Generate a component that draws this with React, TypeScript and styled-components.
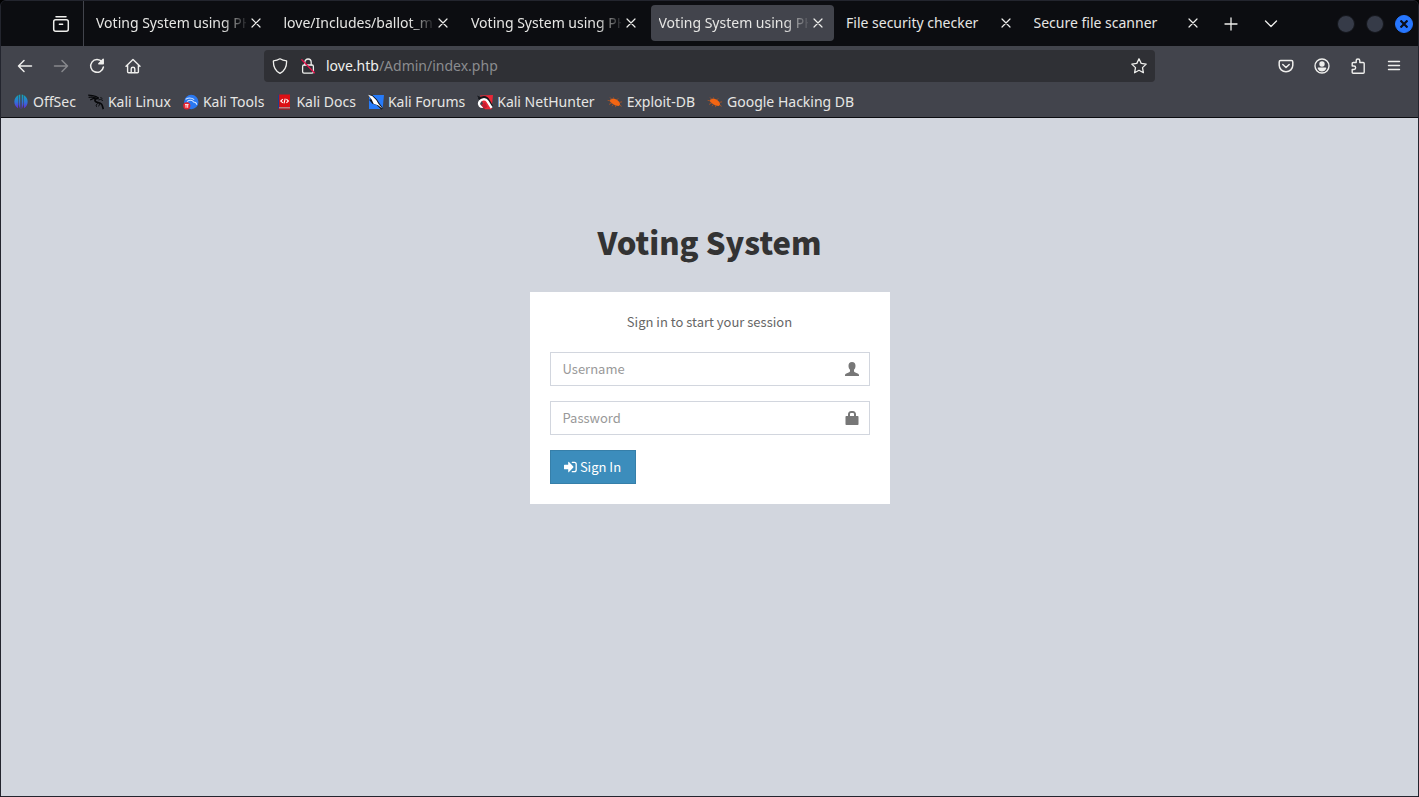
import React from "react";
import styled, { createGlobalStyle, css } from "styled-components";

const uiFont = `"Noto Sans", "Liberation Sans", sans-serif`;
const pageFont = `"Noto Sans CJK SC", "Noto Sans", sans-serif`;

const GlobalStyle = createGlobalStyle`
  *, *::before, *::after { box-sizing: border-box; }
  body { margin: 0; background: #000; }
  button, input { font: inherit; color: inherit; margin: 0; }
`;

const Window = styled.div`
  min-height: 100vh;
  display: flex;
  flex-direction: column;
  border: 1px solid #23252e;
  border-radius: 6px 6px 0 0;
  overflow: hidden;
  background: #0c0d11;
`;

const Chrome = styled.header`
  font-family: ${uiFont};
  font-size: 14px;
  line-height: 20px;
  color: #e6e6e4;
`;

const iconButton = css`
  display: flex;
  align-items: center;
  justify-content: center;
  flex: none;
  padding: 0;
  border: 0;
  background: transparent;
  cursor: pointer;
`;

const TabBar = styled.div`
  display: flex;
  align-items: center;
  height: 45px;
  background: #0c0d11;
`;

const ViewButton = styled.button`
  ${iconButton}
  width: 83px;
  height: 45px;
  padding-left: 37px;
  border-right: 1px solid #42444c;
`;

const TabList = styled.div`
  display: flex;
  flex: 1;
  min-width: 0;
  gap: 4px;
  padding: 0 2px 1px 4px;
`;

const Tab = styled.div<{ $active?: boolean }>`
  display: flex;
  align-items: center;
  flex: 1;
  min-width: 0;
  height: 36px;
  padding: 0 6px 0 8px;
  border-radius: 4px;
  background: ${(p) => (p.$active ? "#42444c" : "transparent")};
`;

const TabLabel = styled.span<{ $fade?: boolean }>`
  flex: 1;
  min-width: 0;
  overflow: hidden;
  white-space: nowrap;
  ${(p) => p.$fade && css`mask-image: linear-gradient(to left, rgba(0, 0, 0, 0.1), #000 24px);`}
`;

const TabClose = styled.button`
  ${iconButton}
  width: 20px;
  height: 20px;
`;

const TabAction = styled.button`
  ${iconButton}
  width: 40px;
  height: 36px;
`;

const WindowControls = styled.div`
  display: flex;
  gap: 11px;
  padding: 0 5px 0 46px;
`;

const WindowControl = styled.button<{ $close?: boolean }>`
  ${iconButton}
  width: 18px;
  height: 18px;
  border: 1px solid ${(p) => (p.$close ? "#2777ff" : "#14161b")};
  border-radius: 50%;
  background: ${(p) => (p.$close ? "#2777ff" : "#363b48")};
`;

const NavBar = styled.nav`
  display: flex;
  align-items: center;
  height: 40px;
  padding: 0 6px;
  background: #42444c;
`;

const NavButton = styled.button<{ $dim?: boolean }>`
  ${iconButton}
  width: 36px;
  height: 32px;
  opacity: ${(p) => (p.$dim ? 0.4 : 1)};
`;

const Spring = styled.div`
  flex: 113;
`;

const UrlBar = styled.div`
  display: flex;
  align-items: center;
  flex: 891;
  height: 32px;
  border-radius: 4px;
  background: #2f3035;
`;

const UrlButton = styled.button<{ $wide?: boolean }>`
  ${iconButton}
  width: ${(p) => (p.$wide ? 32 : 24)}px;
  height: 32px;
`;

const Url = styled.a`
  flex: 1;
  margin-left: 6px;
  color: #8b8c8f;
  text-decoration: none;
`;

const Host = styled.span`
  color: #f0f0ee;
`;

const Bookmarks = styled.div`
  display: flex;
  align-items: center;
  gap: 12px;
  height: 32px;
  padding: 0 12px;
  background: #42444c;
  border-bottom: 1px solid #0c0d11;
`;

const Bookmark = styled.a`
  display: flex;
  align-items: center;
  gap: 4px;
  color: inherit;
  text-decoration: none;
  white-space: nowrap;
`;

const Page = styled.main`
  flex: 1;
  background: #d2d6de;
  font-family: ${pageFont};
  font-size: 13px;
  line-height: 20px;
`;

const LoginBox = styled.div`
  width: 360px;
  margin: 7% auto;
`;

const Logo = styled.h1`
  margin: 0 0 25px;
  font-size: 31px;
  line-height: 50px;
  font-weight: 900;
  text-align: center;
  color: #333;
`;

const Card = styled.form`
  padding: 20px;
  background: #fff;
  color: #666;
`;

const Message = styled.p`
  margin: 0 0 20px;
  text-align: center;
`;

const Field = styled.label`
  position: relative;
  display: block;
  margin-bottom: 15px;
`;

const TextInput = styled.input`
  display: block;
  width: 100%;
  height: 34px;
  padding: 5px 42px 7px 12px;
  border: 1px solid #d2d6de;
  border-radius: 0;
  background: #fff;
  color: #555;
  &::placeholder { color: #999; opacity: 1; }
`;

const FieldIcon = styled.span`
  position: absolute;
  top: 0;
  right: 0;
  display: flex;
  align-items: center;
  justify-content: center;
  width: 35px;
  height: 34px;
  color: #777;
`;

const SubmitButton = styled.button`
  display: flex;
  align-items: center;
  justify-content: center;
  gap: 3px;
  width: 86px;
  height: 34px;
  padding: 0;
  border: 1px solid #367fa9;
  background: #3c8dbc;
  color: #fff;
  cursor: pointer;
`;

const Line = ({ children, size = 16, width = 1.3 }: { children: React.ReactNode; size?: number; width?: number }) => (
  <svg width={size} height={size} viewBox={`0 0 ${size} ${size}`} fill="none" stroke="#eeeeec" strokeWidth={width} strokeLinecap="round" strokeLinejoin="round" aria-hidden="true">
    {children}
  </svg>
);

const Favicon = ({ children }: { children: React.ReactNode }) => (
  <svg width="16" height="16" viewBox="0 0 16 16" aria-hidden="true">{children}</svg>
);

const ExploitIcon = () => (
  <Favicon>
    <path d="M3 5.800 6 4.600l3.600.8 2.800 2.600.8 2.400-1.400 1.600-3.400-.6L5.200 9.400 3.200 8z" fill="#f26513" />
    <path d="M4.500 5 3 3.400M7 4.800 6.500 3.400M10 5.800 11.200 4.400M12.500 8.400l2.600-.6M12.600 11l2 1.400M4.800 9 2 10.400M6.500 10.200 5 12.200M9 11.300l-.6 1.800M3 6.800.6 6.400" stroke="#b9551f" strokeWidth=".8" />
  </Favicon>
);

const bookmarks = [
  {
    name: "OffSec",
    icon: (
      <Favicon>
        <defs>
          <linearGradient id="offsec" gradientUnits="userSpaceOnUse" x1="0" y1="1" x2="0" y2="15">
            <stop offset="0" stopColor="#12a5b5" />
            <stop offset=".5" stopColor="#2f74d8" />
            <stop offset="1" stopColor="#6a22d8" />
          </linearGradient>
        </defs>
        <path d="M5 1.200v13A7.600 7.600 0 0 1 5 1.200zM5.600 1 7.300.5v14.800L5.600 11zM8.700.5l1.700.5v10L8.700 15.300zM11 1.200a7.600 7.600 0 0 1 0 13z" fill="url(#offsec)" />
      </Favicon>
    ),
  },
  {
    name: "Kali Linux",
    icon: (
      <Favicon>
        <path d="M.2 1.200 4.600 1.700l3.600.9 2.600 1.600M.6 3.400l3-.4 4.600 1M2.200 6 5 4.600l2-.2" stroke="#07080a" strokeWidth="1.200" fill="none" />
        <path d="M10.600 4.400C7.800 4.200 6.200 5.800 7.400 7.400c1.200 1.500 4.200.9 6 2.600 1.200 1.200 1 3 2 5" stroke="#07080a" strokeWidth="1.700" fill="none" />
        <path d="m10.400 6 2.200-.6 2.400 1.200M9.600 9.200l-1.400 2 .4 1.600M11.600 10l-1 2.400M12.400 3.600l2 .8" stroke="#07080a" strokeWidth=".9" fill="none" />
      </Favicon>
    ),
  },
  {
    name: "Kali Tools",
    icon: (
      <Favicon>
        <circle cx="8.300" cy="8" r="7.200" fill="#2a78f0" />
        <path d="M2.600 5.400c2.600-1.800 6-1.600 8.600.2M4 7.600c3-2.200 5.600-1.400 6.600.4 1.800 0 2.800.8 3.200 2.600" stroke="#dceaff" strokeWidth="1.100" fill="none" />
        <circle cx="3.800" cy="11.800" r="3.600" fill="#e8232f" />
        <path d="M2 10.600h3.600M3 10.800v3M4.700 10.800v3" stroke="#fff" strokeWidth=".9" />
      </Favicon>
    ),
  },
  {
    name: "Kali Docs",
    icon: (
      <Favicon>
        <path d="M2 1.200 3.400.4v13.800L2 15.400z" fill="#1d3f8c" />
        <path d="M3.200.4H14v13H3.200z" fill="#dc0f14" />
        <path d="M3 13.600h11v1H3z" fill="#dedede" />
        <path d="M2.200 14.600H14v1H2.600z" fill="#c60d12" />
        <path d="M6.800 5.200 4.800 7l2 1.800M10.400 5.200l2 1.800-2 1.800M9.200 4.600 8 9.400" stroke="#fff" strokeWidth="1.100" fill="none" />
      </Favicon>
    ),
  },
  {
    name: "Kali Forums",
    icon: (
      <Favicon>
        <path d="M1 1h15l-1.400 14H1z" fill="#267bfa" />
        <path d="M0 1 4 .8l5 4.6 2.400 3.800 3.800 5.400-2 .8-4.600-4.400-4.200-1.200L1 5.800l2-.6z" fill="#10131a" />
        <path d="M0 .8 4.200 2l4 4 2.400 4 4 4.800-4.600-3.600-4.400-1.400-1.800-4z" fill="#fff" />
      </Favicon>
    ),
  },
  {
    name: "Kali NetHunter",
    icon: (
      <Favicon>
        <path d="M3 1.600 16 1l-1.400 14.200H8z" fill="#ec2737" />
        <path d="M2 5.600C5 2.400 9.400 3 11 6l3.600 6.400" stroke="#15171c" strokeWidth="3" fill="none" />
        <path d="M6.400 12.800C3.200 13.200 1.200 11 2.200 8.400c1.600-3.600 6.400-4.200 8.200-1.200l4.200 6.600" stroke="#fff" strokeWidth="2.400" fill="none" />
        <path d="m4 11 4-2.600 2.600 4.600-3.600 2z" fill="#c41d31" />
        <path d="m0 1.400 4 1.800-2.400 1z" fill="#15171c" />
      </Favicon>
    ),
  },
  { name: "Exploit-DB", icon: <ExploitIcon /> },
  { name: "Google Hacking DB", icon: <ExploitIcon /> },
];

const tabs = [
  { title: "Voting System using PHP", fade: true },
  { title: "love/Includes/ballot_modal", fade: true },
  { title: "Voting System using PHP", fade: true },
  { title: "Voting System using PHP", fade: true, active: true },
  { title: "File security checker" },
  { title: "Secure file scanner" },
];

export default function App() {
  return (
    <>
      <GlobalStyle />
      <Window>
        <Chrome>
          <TabBar>
            <ViewButton aria-label="Recent browsing">
              <Line size={18} width={1.5}>
                <path d="M4 1.700h10" />
                <rect x="1.700" y="4.700" width="14.600" height="11.600" rx="2" />
                <path d="M7.400 9.200h3.200" />
              </Line>
            </ViewButton>
            <TabList>
              {tabs.map((t, i) => (
                <Tab key={i} $active={t.active}>
                  <TabLabel $fade={t.fade}>{t.title}</TabLabel>
                  <TabClose aria-label="Close tab">
                    <Line size={10} width={1.2}><path d="m1 1 8 8M9 1 1 9" /></Line>
                  </TabClose>
                </Tab>
              ))}
            </TabList>
            <TabAction aria-label="New tab">
              <Line size={14}><path d="M7 1v12M1 7h12" /></Line>
            </TabAction>
            <TabAction aria-label="List all tabs">
              <Line size={14}><path d="m1.500 4 5.500 5.500L12.500 4" /></Line>
            </TabAction>
            <WindowControls>
              <WindowControl aria-label="Minimize" />
              <WindowControl aria-label="Maximize" />
              <WindowControl $close aria-label="Close window">
                <svg width="8" height="8" viewBox="0 0 8 8" stroke="#0b0f1a" strokeWidth="2.200" aria-hidden="true">
                  <path d="m.5.5 7 7M7.500.5l-7 7" />
                </svg>
              </WindowControl>
            </WindowControls>
          </TabBar>

          <NavBar>
            <NavButton aria-label="Back">
              <Line width={1.5}><path d="M1.500 8h13M7 2.500 1.500 8 7 13.500" /></Line>
            </NavButton>
            <NavButton $dim aria-label="Forward">
              <Line width={1.5}><path d="M1.500 8h13M9 2.500 14.500 8 9 13.500" /></Line>
            </NavButton>
            <NavButton aria-label="Reload">
              <Line width={1.5}>
                <path d="M13 3.800A6.400 6.400 0 1 0 14.400 9" />
                <path d="M14.200 1.400v4.400H9.800z" fill="#eeeeec" />
              </Line>
            </NavButton>
            <NavButton aria-label="Home">
              <Line width={1.4}>
                <path d="M1 8.200 8 1.400l7 6.800M2.600 7v6.800q0 1 1 1h8.800q1 0 1-1V7" />
                <path d="M6.200 14.600v-3.800q0-1.600 1.800-1.600t1.800 1.600v3.800" />
              </Line>
            </NavButton>
            <Spring />
            <UrlBar>
              <UrlButton $wide aria-label="Tracking protection">
                <Line><path d="M8 .8c2 1.300 4.200 1.900 6.600 2.100.2 5.600-1.600 9.800-6.600 12.400C3 12.700 1.200 8.500 1.400 2.900 3.800 2.700 6 2.100 8 .8z" /></Line>
              </UrlButton>
              <UrlButton aria-label="Connection not secure">
                <Line>
                  <rect x="2.600" y="7" width="10.800" height="8.200" rx="1.400" />
                  <path d="M4.800 7V4.200a3.200 3.200 0 0 1 6.400 0V7" />
                  <path d="m1.800 1.800 12.600 13" stroke="#e4124c" />
                </Line>
              </UrlButton>
              <Url href="#"><Host>love.htb</Host>/Admin/index.php</Url>
              <UrlButton $wide aria-label="Bookmark this page">
                <Line><path d="m8 .8 2.200 4.600 5 .7-3.700 3.500.9 5.100L8 12.300l-4.400 2.400.9-5.100L.8 6.100l5-.7z" /></Line>
              </UrlButton>
            </UrlBar>
            <Spring />
            <NavButton aria-label="Save to Pocket">
              <Line width={1.5}>
                <path d="M2.600 2.500h10.800q1.400 0 1.400 1.400v3.300a6.800 6.600 0 0 1-13.600 0V3.900q0-1.400 1.400-1.400z" />
                <path d="M4.800 6.500 8 9.500l3.200-3" />
              </Line>
            </NavButton>
            <NavButton aria-label="Account">
              <Line width={1.4}>
                <circle cx="8" cy="8" r="7" />
                <circle cx="8" cy="6" r="2" fill="#eeeeec" />
                <path d="M4.400 10.200h7.200q-1 2.600-3.600 2.600t-3.600-2.600z" fill="#eeeeec" />
              </Line>
            </NavButton>
            <NavButton aria-label="Extensions">
              <Line width={1.4}>
                <path d="M2.200 8V5.500q0-1 1-1h3V2.800a1.800 1.800 0 0 1 3.600 0v1.700h3.400q1 0 1 1v8.700q0 1-1 1h-10q-1 0-1-1V11.500h1.700a1.750 1.750 0 0 0 0-3.500z" />
              </Line>
            </NavButton>
            <NavButton aria-label="Open application menu">
              <Line width={1.4}><path d="M2.500 3.500h11M2.500 7.500h11M2.500 11.500h11" /></Line>
            </NavButton>
          </NavBar>

          <Bookmarks>
            {bookmarks.map((b) => (
              <Bookmark key={b.name} href="#">{b.icon}{b.name}</Bookmark>
            ))}
          </Bookmarks>
        </Chrome>

        <Page>
          <LoginBox>
            <Logo>Voting System</Logo>
            <Card onSubmit={(e) => e.preventDefault()}>
              <Message>Sign in to start your session</Message>
              <Field>
                <TextInput type="text" placeholder="Username" aria-label="Username" />
                <FieldIcon>
                  <svg width="14" height="14" viewBox="0 0 14 14" fill="currentColor" aria-hidden="true">
                    <path d="M7 0c2.300 0 3.500 1.500 3.500 3.800 0 1.800-.6 3.200-1.500 4v1.400c0 .5.300.8.800 1l2.800 1.200c.9.400 1.400 1 1.400 1.700v.9H0v-.9c0-.7.5-1.300 1.400-1.700l2.800-1.200c.5-.2.8-.5.8-1V7.800c-.9-.8-1.500-2.200-1.500-4C3.500 1.500 4.700 0 7 0z" />
                  </svg>
                </FieldIcon>
              </Field>
              <Field>
                <TextInput type="password" placeholder="Password" aria-label="Password" />
                <FieldIcon>
                  <svg width="14" height="14" viewBox="0 0 14 14" fill="currentColor" aria-hidden="true">
                    <path fillRule="evenodd" d="M3 5V3.200C3 1.300 4.300 0 6.200 0h1.600C9.700 0 11 1.300 11 3.200V5h1.700q.8 0 .8.800v7.400q0 .8-.8.800H1.300q-.8 0-.8-.8V5.800q0-.8.8-.8zm2 0h4V3.300C9 2.500 8.500 2 7.700 2H6.300C5.500 2 5 2.500 5 3.300z" />
                  </svg>
                </FieldIcon>
              </Field>
              <SubmitButton type="submit">
                <svg width="13" height="12" viewBox="0 0 13 12" aria-hidden="true">
                  <path d="M0 4.300q0-.6.600-.6h3.600V1.300q0-.9.800-.3l4.300 4.500q.4.500 0 1L5 11q-.8.600-.8-.3V8.300H.6q-.6 0-.6-.6z" fill="#fff" />
                  <path d="M8.300 1.300h2q1.900 0 1.900 1.900v5.600q0 1.900-1.900 1.900h-2" fill="none" stroke="#fff" strokeWidth="1.300" strokeLinecap="round" />
                </svg>
                Sign In
              </SubmitButton>
            </Card>
          </LoginBox>
        </Page>
      </Window>
    </>
  );
}
